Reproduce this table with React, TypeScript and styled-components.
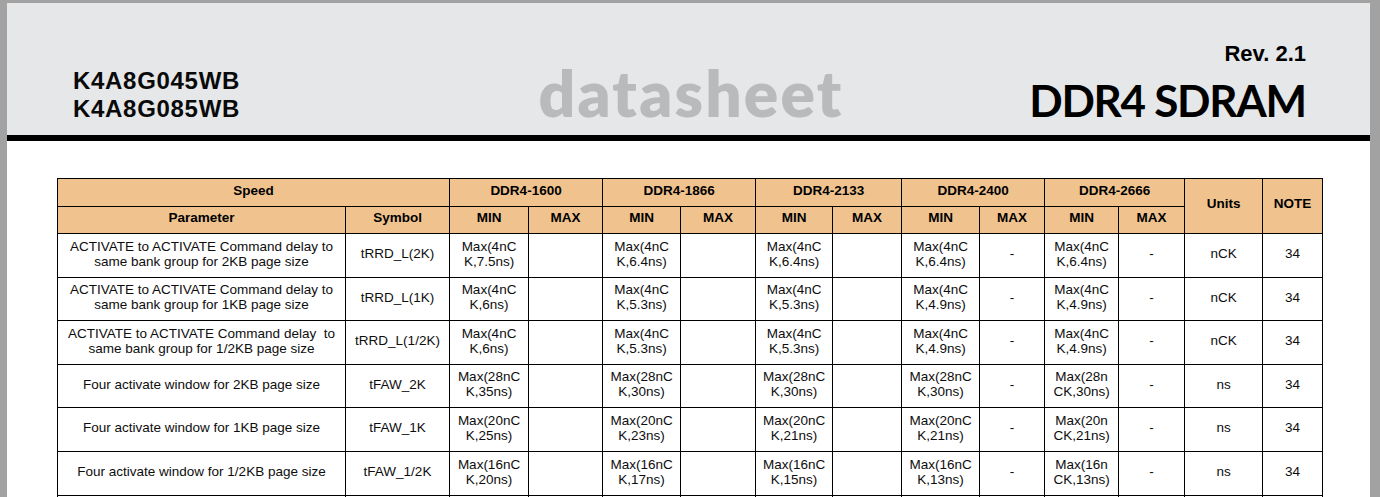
import React from "react";
import styled, { createGlobalStyle } from "styled-components";

const Global = createGlobalStyle`
  html, body {
    margin: 0;
    padding: 0;
    background: #a2a2a2;
    overflow: hidden;
  }
  body {
    font-family: "Liberation Sans", Arial, sans-serif;
  }
`;

const Page = styled.div`
  margin: 3px 10px 0 7px;
  background: #ffffff;
  min-height: 494px;
`;

const Header = styled.header`
  box-sizing: border-box;
  height: 138px;
  background: #e6e7e9;
  border-bottom: 6px solid #000;
  display: grid;
  grid-template-columns: 1fr auto 1fr;
  align-items: last baseline;
  align-content: end;
  padding: 0 63px 10px 66px;
`;

const PartNumbers = styled.div`
  font-family: "Liberation Sans", Arial, sans-serif;
  font-weight: 700;
  font-size: 24px;
  line-height: 28px;
  letter-spacing: 0.7px;
  color: #0a0a0a;
  justify-self: start;
`;

const Watermark = styled.div`
  font-family: Lato, "Open Sans", sans-serif;
  font-weight: 800;
  font-size: 64px;
  line-height: 1;
  color: #b9babc;
  letter-spacing: 2.2px;
  margin-right: -2.2px;
`;

const TitleBlock = styled.div`
  justify-self: end;
  text-align: right;
  color: #000;
`;

const Rev = styled.div`
  font-family: "Liberation Sans", Arial, sans-serif;
  font-weight: 700;
  font-size: 22px;
  line-height: 26px;
  margin-bottom: 11px;
  margin-right: 1px;
`;

const Product = styled.div`
  font-family: Lato, "Open Sans", sans-serif;
  font-weight: 700;
  font-size: 44px;
  line-height: 1;
  letter-spacing: -1.3px;
  margin-right: 1.3px;
`;

const TableWrap = styled.div`
  padding: 37px 0 0 50px;
`;

const Table = styled.table`
  border-collapse: collapse;
  table-layout: fixed;
  width: 1266px;
  font-family: "Liberation Sans", Arial, sans-serif;
  font-size: 13.5px;
  color: #0d0d0d;
`;

const HeadCell = styled.th<{ $h?: number }>`
  background: #f0c38e;
  border: 1px solid #000;
  font-weight: 700;
  color: #000;
  text-align: center;
  vertical-align: middle;
  padding: 0 0 5px;
  height: ${(p) => (p.$h ?? 26) - 5}px;
  line-height: 15px;
`;

const Cell = styled.td`
  border: 1px solid #000;
  text-align: center;
  vertical-align: middle;
  padding: 0 2px 4px;
  line-height: 15px;
  white-space: pre-line;
`;

const BodyRow = styled.tr<{ $h: number }>`
  height: ${(p) => p.$h}px;
`;

const widths = [288, 104, 79, 74, 78, 75, 77, 69, 78, 65, 74, 66, 78, 60];

const speeds = ["DDR4-1600", "DDR4-1866", "DDR4-2133", "DDR4-2400", "DDR4-2666"];

type Row = { p: string; s: string; v: string[]; u: string; n: string };

const rows: Row[] = [
  {
    p: "ACTIVATE to ACTIVATE Command delay to\nsame bank group for 2KB page size",
    s: "tRRD_L(2K)",
    v: ["Max(4nC\nK,7.5ns)", "", "Max(4nC\nK,6.4ns)", "", "Max(4nC\nK,6.4ns)", "", "Max(4nC\nK,6.4ns)", "-", "Max(4nC\nK,6.4ns)", "-"],
    u: "nCK",
    n: "34",
  },
  {
    p: "ACTIVATE to ACTIVATE Command delay to\nsame bank group for 1KB page size",
    s: "tRRD_L(1K)",
    v: ["Max(4nC\nK,6ns)", "", "Max(4nC\nK,5.3ns)", "", "Max(4nC\nK,5.3ns)", "", "Max(4nC\nK,4.9ns)", "-", "Max(4nC\nK,4.9ns)", "-"],
    u: "nCK",
    n: "34",
  },
  {
    p: "ACTIVATE to ACTIVATE Command delay\u00a0 to\nsame bank group for 1/2KB page size",
    s: "tRRD_L(1/2K)",
    v: ["Max(4nC\nK,6ns)", "", "Max(4nC\nK,5.3ns)", "", "Max(4nC\nK,5.3ns)", "", "Max(4nC\nK,4.9ns)", "-", "Max(4nC\nK,4.9ns)", "-"],
    u: "nCK",
    n: "34",
  },
  {
    p: "Four activate window for 2KB page size",
    s: "tFAW_2K",
    v: ["Max(28nC\nK,35ns)", "", "Max(28nC\nK,30ns)", "", "Max(28nC\nK,30ns)", "", "Max(28nC\nK,30ns)", "-", "Max(28n\nCK,30ns)", "-"],
    u: "ns",
    n: "34",
  },
  {
    p: "Four activate window for 1KB page size",
    s: "tFAW_1K",
    v: ["Max(20nC\nK,25ns)", "", "Max(20nC\nK,23ns)", "", "Max(20nC\nK,21ns)", "", "Max(20nC\nK,21ns)", "-", "Max(20n\nCK,21ns)", "-"],
    u: "ns",
    n: "34",
  },
  {
    p: "Four activate window for 1/2KB page size",
    s: "tFAW_1/2K",
    v: ["Max(16nC\nK,20ns)", "", "Max(16nC\nK,17ns)", "", "Max(16nC\nK,15ns)", "", "Max(16nC\nK,13ns)", "-", "Max(16n\nCK,13ns)", "-"],
    u: "ns",
    n: "34",
  },
];

const heights = [44, 43, 44, 43, 44, 44];

export default function App() {
  return (
    <>
      <Global />
      <Page>
        <Header>
          <PartNumbers>
            K4A8G045WB
            <br />
            K4A8G085WB
          </PartNumbers>
          <Watermark>datasheet</Watermark>
          <TitleBlock>
            <Rev>Rev. 2.1</Rev>
            <Product>DDR4 SDRAM</Product>
          </TitleBlock>
        </Header>
        <TableWrap>
          <Table>
            <colgroup>
              {widths.map((w, i) => (
                <col key={i} style={{ width: w }} />
              ))}
            </colgroup>
            <thead>
              <tr>
                <HeadCell colSpan={2} $h={27}>Speed</HeadCell>
                {speeds.map((s) => (
                  <HeadCell key={s} colSpan={2} $h={27}>
                    {s}
                  </HeadCell>
                ))}
                <HeadCell rowSpan={2}>Units</HeadCell>
                <HeadCell rowSpan={2}>NOTE</HeadCell>
              </tr>
              <tr>
                <HeadCell $h={26}>Parameter</HeadCell>
                <HeadCell $h={26}>Symbol</HeadCell>
                {speeds.map((s) => (
                  <React.Fragment key={s}>
                    <HeadCell $h={26}>MIN</HeadCell>
                    <HeadCell $h={26}>MAX</HeadCell>
                  </React.Fragment>
                ))}
              </tr>
            </thead>
            <tbody>
              {rows.map((r, i) => (
                <BodyRow key={i} $h={heights[i]}>
                  <Cell>{r.p}</Cell>
                  <Cell>{r.s}</Cell>
                  {r.v.map((v, j) => (
                    <Cell key={j}>{v}</Cell>
                  ))}
                  <Cell>{r.u}</Cell>
                  <Cell>{r.n}</Cell>
                </BodyRow>
              ))}
              <BodyRow $h={44}>
                {widths.map((_, j) => (
                  <Cell key={j}>{"\u00a0"}</Cell>
                ))}
              </BodyRow>
            </tbody>
          </Table>
        </TableWrap>
      </Page>
    </>
  );
}
